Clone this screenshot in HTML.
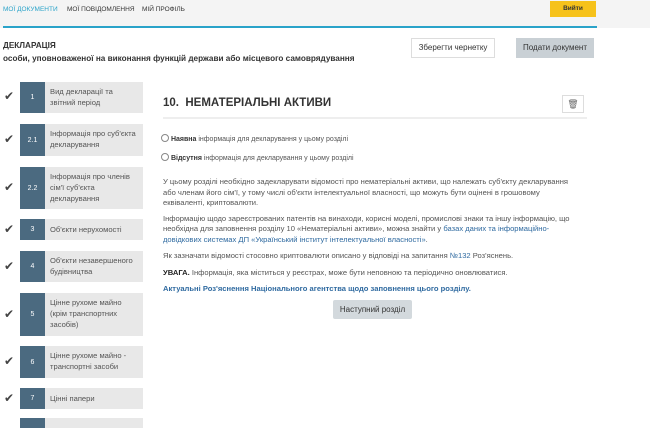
<!DOCTYPE html><html><head><meta charset="utf-8"><style>
body{margin:0;width:650px;height:420px;overflow:hidden;background:#fff;font-family:"Liberation Sans",sans-serif;color:#333;position:relative}
.a{position:absolute}
.nav{left:0;top:0;width:650px;height:28px;background:#f4f4f4}
.nav span{position:absolute;top:6px;font-size:6.5px;color:#333}
.line{left:3px;top:26px;width:594px;height:2px;background:#2aa3c9}
.btn{position:absolute;font-size:8px;text-align:center;box-sizing:border-box}
.item .n{position:absolute;left:20px;width:25px;background:#4b6a80;color:#fff;font-size:7px;display:flex;align-items:center;justify-content:center}
.item .l{position:absolute;left:45px;width:98px;background:#e8e8e8;font-size:7.6px;color:#555;line-height:11px;padding:4px 8px 0 5px;box-sizing:border-box}
.ck{position:absolute;left:4px;font-size:12px;color:#444}
p{margin:0}
.txt{left:163px;width:412px;font-size:7.6px;line-height:10.5px;color:#555}
.txt a{color:#2f6aa0;text-decoration:none}
</style></head><body>
<div class="a nav"><span style="left:3px;color:#2aa3c9">МОЇ ДОКУМЕНТИ</span><span style="left:67px">МОЇ ПОВІДОМЛЕННЯ</span><span style="left:142px">МІЙ ПРОФІЛЬ</span>
<div class="btn" style="left:550px;top:1px;width:46px;height:16px;background:#f6c21b;font-weight:bold;font-size:6.5px;line-height:16px;color:#333">Вийти</div></div>
<div class="a line"></div>
<div class="a" style="left:3px;top:39px;font-size:8.2px;font-weight:bold;color:#333;line-height:13px">ДЕКЛАРАЦІЯ<br>особи, уповноваженої на виконання функцій держави або місцевого самоврядування</div>
<div class="btn" style="left:411px;top:38px;width:84px;height:20px;border:1px solid #ddd;line-height:18px;background:#fff">Зберегти чернетку</div>
<div class="btn" style="left:516px;top:38px;width:78px;height:20px;background:#c9d0d5;line-height:20px">Подати документ</div>

<div class="item">
<span class="ck" style="top:89px">✔</span><div class="n" style="top:82px;height:31px">1</div><div class="l" style="top:82px;height:31px">Вид декларації та звітний період</div>
<span class="ck" style="top:132px">✔</span><div class="n" style="top:124px;height:32px">2.1</div><div class="l" style="top:124px;height:32px;padding-right:2px">Інформація про суб'єкта декларування</div>
<span class="ck" style="top:180px">✔</span><div class="n" style="top:167px;height:42px">2.2</div><div class="l" style="top:167px;height:42px;padding-right:12px">Інформація про членів сім'ї суб'єкта декларування</div>
<span class="ck" style="top:222px">✔</span><div class="n" style="top:219px;height:21px">3</div><div class="l" style="top:219px;height:21px;padding-top:5px">Об'єкти нерухомості</div>
<span class="ck" style="top:259px">✔</span><div class="n" style="top:251px;height:31px">4</div><div class="l" style="top:251px;height:31px">Об'єкти незавершеного будівництва</div>
<span class="ck" style="top:307px">✔</span><div class="n" style="top:293px;height:43px">5</div><div class="l" style="top:293px;height:43px;padding-right:12px">Цінне рухоме майно (крім транспортних засобів)</div>
<span class="ck" style="top:354px">✔</span><div class="n" style="top:346px;height:32px">6</div><div class="l" style="top:346px;height:32px">Цінне рухоме майно - транспортні засоби</div>
<span class="ck" style="top:391px">✔</span><div class="n" style="top:388px;height:21px">7</div><div class="l" style="top:388px;height:21px;padding-top:5px">Цінні папери</div>
<div class="n" style="top:418px;height:10px"></div><div class="l" style="top:418px;height:10px"></div>
</div>

<div class="a" style="left:163px;top:97px;font-size:11.5px;font-weight:bold;color:#333">10.&nbsp; НЕМАТЕРІАЛЬНІ АКТИВИ</div>
<div class="a" style="left:562px;top:95px;width:22px;height:18px;border:1px solid #ddd;box-sizing:border-box;text-align:center;font-size:9px;line-height:16px;color:#666">🗑</div>
<div class="a" style="left:163px;top:117px;width:424px;height:2px;background:#eee"></div>
<div class="a" style="left:161px;top:134px;font-size:7px;color:#555"><span style="display:inline-block;width:6px;height:6px;border:1px solid #888;border-radius:50%;vertical-align:-1px"></span> <b style="color:#333">Наявна</b> інформація для декларування у цьому розділі</div>
<div class="a" style="left:161px;top:153px;font-size:7px;color:#555"><span style="display:inline-block;width:6px;height:6px;border:1px solid #888;border-radius:50%;vertical-align:-1px"></span> <b style="color:#333">Відсутня</b> інформація для декларування у цьому розділі</div>
<div class="a txt" style="top:177px">
<p>У цьому розділі необхідно задекларувати відомості про нематеріальні активи, що належать суб'єкту декларування або членам його сім'ї, у тому числі об'єкти інтелектуальної власності, що можуть бути оцінені в грошовому еквіваленті, криптовалюти.</p>
<p style="margin-top:5px">Інформацію щодо зареєстрованих патентів на винаходи, корисні моделі, промислові знаки та іншу інформацію, що необхідна для заповнення розділу 10 «Нематеріальні активи», можна знайти у <a>базах даних та інформаційно-довідкових системах ДП «Український інститут інтелектуальної власності»</a>.</p>
<p style="margin-top:6px">Як зазначати відомості стосовно криптовалюти описано у відповіді на запитання <a>№132</a> Роз'яснень.</p>
<p style="margin-top:6px"><b style="color:#222">УВАГА.</b> Інформація, яка міститься у реєстрах, може бути неповною та періодично оновлюватися.</p>
<p style="margin-top:6px"><a style="font-weight:bold">Актуальні Роз'яснення Національного агентства щодо заповнення цього розділу.</a></p>
</div>
<div class="btn" style="left:333px;top:300px;width:79px;height:19px;background:#d3d9dd;line-height:19px;border-radius:2px">Наступний розділ</div>
</body></html>
